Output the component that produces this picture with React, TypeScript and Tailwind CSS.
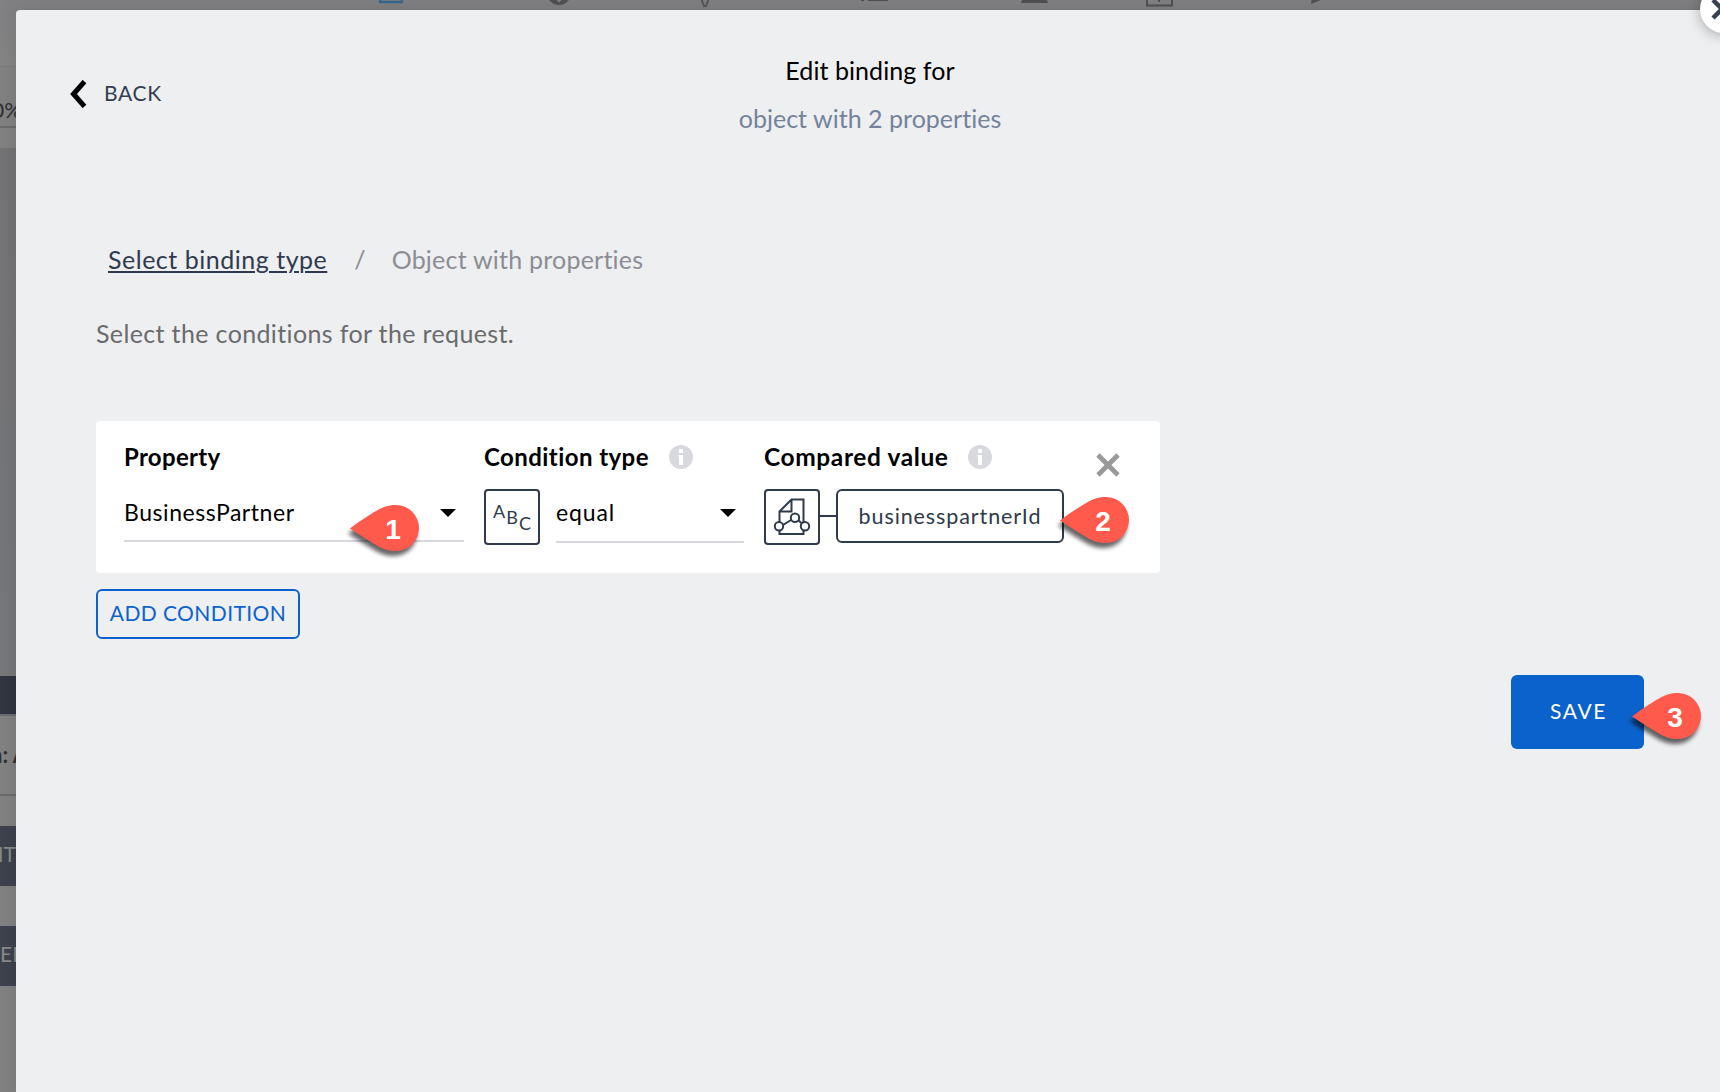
import type { ReactNode } from "react";

function Marker({ n, className }: { n: number; className: string }) {
  return (
    <div className={"absolute z-10 h-[46px] w-[69px] " + className}>
      <svg className="absolute inset-0 overflow-visible drop-shadow-[-2px_5px_2px_rgba(0,0,0,0.6)]" width="69" height="46" viewBox="0 0 69 46">
        <path d="M0 23.5C10 16 20 9.500 27 5.500C34 1.500 39 0 46 0A23 23 0 0 1 46 46C39 46 34 44.500 27 40.500C19 36 10 30 0 23.500Z" fill="#ff5a4c" />
      </svg>
      <span className="absolute left-[20px] top-[2px] w-[46px] text-center font-['Liberation_Sans'] text-[28px] font-bold leading-[46px] tracking-normal text-white">{n}</span>
    </div>
  );
}

function InfoIcon() {
  return (
    <svg width="24" height="24" viewBox="0 0 24 24">
      <circle cx="12" cy="12" r="12" fill="#d8d9de" />
      <path d="M10 4h4v4h-4zM9.500 10H14v10h-4v-8h-.5z" fill="#fff" />
    </svg>
  );
}

function Select({ children, className }: { children: ReactNode; className: string }) {
  return (
    <div className={"flex justify-between border-b-2 border-[#d7d7dd] text-[23px] leading-8 text-black " + className}>
      <span>{children}</span>
      <svg className="mr-2 mt-[13px]" width="16" height="8" viewBox="0 0 16 8">
        <path d="M0 0h16L8 8z" fill="#000" />
      </svg>
    </div>
  );
}

function Backdrop() {
  return (
    <div className="flex h-full w-full flex-col bg-[#828283] font-['Lato'] text-[22px] leading-8 text-[#303033]">
      <div className="flex h-[67px] items-start overflow-hidden border-b border-[#7b7b7d] bg-gradient-to-b from-[#818183] to-[#858586]">
        <svg className="ml-[379px]" width="24" height="4" viewBox="0 0 24 4"><path d="M1 -6V2H23V-6" fill="none" stroke="#35698c" strokeWidth="2.500" /></svg>
        <svg className="ml-[144px]" width="24" height="6" viewBox="0 0 24 6"><circle cx="12" cy="-7" r="12" fill="#505055" /><path d="M12 -6V1M9 -2l3 3 3-3" stroke="#838385" strokeWidth="2" fill="none" /></svg>
        <svg className="ml-[128px]" width="12" height="8" viewBox="0 0 12 8"><path d="M2 -2L5 6H7L10 -2" fill="none" stroke="#56565a" strokeWidth="2" /></svg>
        <svg className="ml-[149px]" width="28" height="2" viewBox="0 0 28 2"><path d="M1 0H4M8 0H28" stroke="#4d4d52" strokeWidth="2" /></svg>
        <svg className="ml-[133px]" width="28" height="4" viewBox="0 0 28 4"><path d="M1 0H26L27 3H0Z" fill="#505054" /></svg>
        <svg className="ml-[97px]" width="28" height="8" viewBox="0 0 28 8"><path d="M1 -4V5.500H26V-4M13 -4V2" fill="none" stroke="#505054" strokeWidth="2" /></svg>
        <svg className="ml-[137px]" width="12" height="6" viewBox="0 0 12 6"><path d="M1 -2L0 4L10 0V-2Z" fill="#505054" /></svg>
      </div>
      <div className="flex h-[61px] w-5 justify-end overflow-hidden border-b-2 border-[#6c6c6f] pt-[27px]">
        <span className="-mr-0.5">0%</span>
      </div>
      <div className="h-5" />
      <div className="h-[528px] bg-gradient-to-b from-[#747476] to-[#77787c]" />
      <div className="h-[38px] bg-[#31353f]" />
      <div className="h-[82px] w-10 border-y-2 border-[#6c6c6f] pt-[23px] whitespace-nowrap">
        <span className="-ml-2.5 font-bold">n: A</span>
      </div>
      <div className="h-[30px]" />
      <div className="flex h-[60px] w-4 items-center justify-end bg-[#3d424d] pb-1 text-[21px] text-[#8a8a8b]">ENT</div>
      <div className="h-10" />
      <div className="flex h-[60px] w-8 items-center bg-[#3d424d] pb-1 text-[21px] text-[#8a8a8b]">EN</div>
    </div>
  );
}

export default function App() {
  return (
    <div className="relative h-[1092px] w-[1720px] overflow-hidden font-['Lato',sans-serif]">
      <Backdrop />
      <main className="absolute left-4 top-2.5 h-[1090px] w-[1708px] rounded-tl bg-[#eeeff1] pt-9 shadow-[0_0_20px_rgba(0,0,0,0.12)]">
        <button className="absolute -right-6 -top-[25px] flex size-12 items-center justify-center rounded-full bg-white shadow-[0_2px_14px_rgba(0,0,0,0.3)]">
          <svg className="-ml-1" width="24" height="24" viewBox="0 0 24 24"><path d="M3 3L21 21M21 3L3 21" stroke="#384152" strokeWidth="4.500" /></svg>
        </button>

        <header className="grid grid-cols-[1fr_auto_1fr] items-center">
          <button className="ml-[53px] flex items-center justify-self-start">
            <svg width="18" height="28" viewBox="0 0 18 28"><path d="M15.500 1.500L4.500 14L15.500 26.500" fill="none" stroke="#000" strokeWidth="5" /></svg>
            <span className="ml-[17px] pb-0.5 text-[21px] leading-7 tracking-[0.7px] text-[#343e50]">BACK</span>
          </button>
          <div className="text-center text-[25px] leading-[48px]">
            <h1 className="tracking-[0.07px] text-black">Edit binding for</h1>
            <p className="tracking-[0.02px] text-[#74839b]">object with 2 properties</p>
          </div>
        </header>

        <nav className="mt-[101px] flex pl-[92px] text-[25px] leading-8 text-[#8c8d94]">
          <a className="tracking-[0.52px] text-[#2f3a4f] underline decoration-2 underline-offset-2">Select binding type</a>
          <span className="ml-[27px]">/</span>
          <span className="ml-[26px] tracking-[0.22px]">Object with properties</span>
        </nav>
        <p className="ml-20 mt-[42px] text-[25px] leading-8 tracking-[0.36px] text-[#6a6b6d]">Select the conditions for the request.</p>

        <section className="relative ml-20 mt-[72px] flex h-[152px] w-[1064px] gap-5 rounded bg-white pl-7 pt-5">
          <div className="w-[340px]">
            <h2 className="text-2xl font-bold leading-8 tracking-[0.3px]">Property</h2>
            <Select className="mt-4 h-[53px] pt-[7px] tracking-[0.55px]">BusinessPartner</Select>
          </div>
          <div className="w-[260px]">
            <div className="flex items-center gap-5">
              <h2 className="text-2xl font-bold leading-8 tracking-[0.43px]">Condition type</h2>
              <InfoIcon />
            </div>
            <div className="mt-4 flex gap-4">
              <div className="flex size-14 justify-center gap-px rounded border-2 border-[#2f3a4a] pt-2 text-lg leading-6 text-[#2f3a4a]">
                <span>A</span><span className="mt-1.5">B</span><span className="mt-3">C</span>
              </div>
              <Select className="h-[54px] flex-1 pt-[7px] tracking-[0.85px]">equal</Select>
            </div>
          </div>
          <div className="w-[300px]">
            <div className="flex items-center gap-5">
              <h2 className="text-[24.5px] font-bold leading-8 tracking-[0.6px]">Compared value</h2>
              <InfoIcon />
            </div>
            <div className="mt-4 flex items-start">
              <div className="size-14 rounded border-2 border-[#2f3a4a]">
                <svg className="-ml-0.5 -mt-0.5" width="56" height="56" viewBox="0 0 56 56" fill="none" stroke="#2f3a4a" strokeWidth="2">
                  <path d="M15.500 33V22.500L27.500 10.500H39.500V33M27.500 10.500V22.500H15.500M15.500 41.500V45H39.500V41.500M19 36L27 31M34.500 31.500L38 34.500" />
                  <circle cx="15" cy="37.300" r="4.200" />
                  <circle cx="31" cy="28.700" r="4.200" />
                  <circle cx="41" cy="37.300" r="4.200" />
                </svg>
              </div>
              <div className="mt-[26px] h-0.5 w-4 bg-[#2f3a4a]" />
              <div className="h-[54px] w-[228px] rounded-md border-2 border-[#2f3a4a] text-center text-[21.5px] leading-[50px] tracking-[0.9px] text-[#2f3a4a]">businesspartnerId</div>
            </div>
          </div>
          <svg className="ml-3 mt-3" width="24" height="24" viewBox="0 0 24 24"><path d="M2 2L22 22M22 2L2 22" stroke="#999" strokeWidth="4.800" /></svg>
          <Marker n={1} className="left-[254px] top-[84px]" />
          <Marker n={2} className="left-[964px] top-[76px]" />
        </section>

        <button className="ml-20 mt-4 flex h-[50px] w-[204px] items-center justify-center rounded-md border-2 border-[#0c62cc] pb-0.5 text-[21px] tracking-[0.4px] text-[#0c62cc]">ADD CONDITION</button>

        <div className="mt-9 flex justify-end pr-20">
          <button className="relative h-[74px] w-[133px] rounded-md bg-[#0c62cc] pb-0.5 pl-0.5 text-[21px] tracking-[1.6px] text-white">
            SAVE
            <Marker n={3} className="left-[121px] top-[18px]" />
          </button>
        </div>
      </main>
    </div>
  );
}
